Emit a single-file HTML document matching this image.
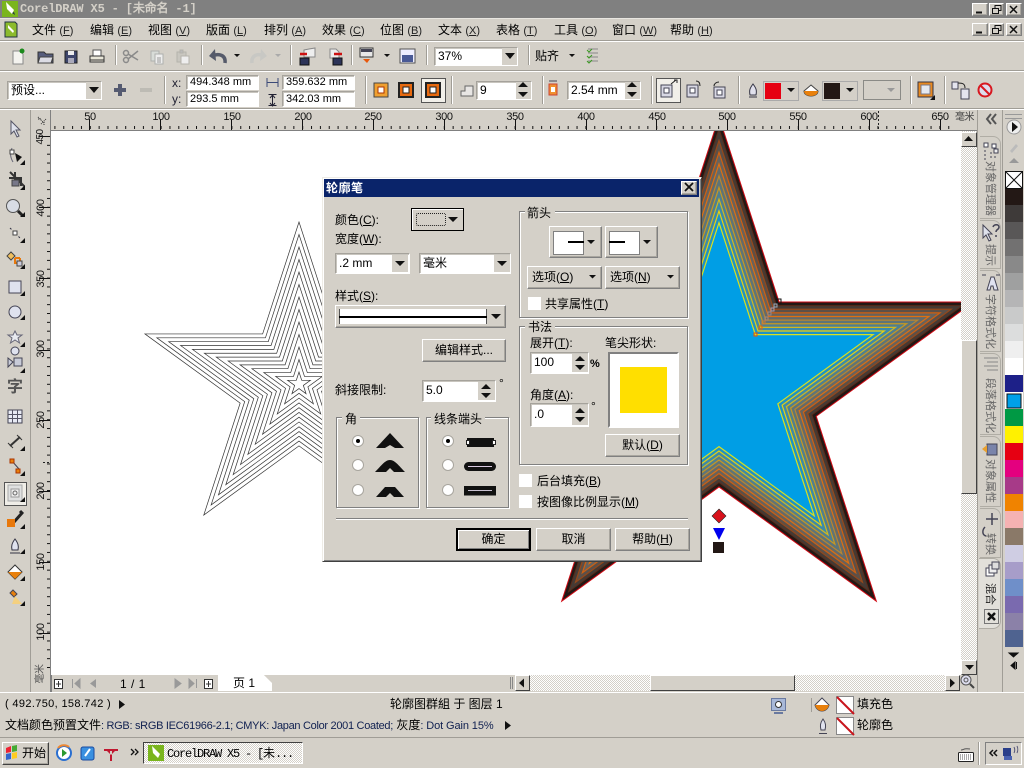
<!DOCTYPE html>
<html lang="zh"><head><meta charset="utf-8"><title>CorelDRAW X5</title>
<style>
html,body{margin:0;padding:0;width:1024px;height:768px;overflow:hidden;background:#d4d0c8}
body{position:relative;font:12px/14px "Liberation Sans","WenQuanYi Zen Hei","Noto Sans CJK SC",sans-serif;color:#000}
.a,.t,.b,.i,.w,.s{position:absolute;box-sizing:border-box}
.t{white-space:nowrap;height:14px}
.b{background:#d4d0c8;border:1px solid;border-color:#fff #808080 #808080 #fff;box-shadow:inset -1px -1px 0 #a9a69f;text-align:center;white-space:nowrap}
.f{position:absolute;background:#d4d0c8}
.i{background:#fff;border:1px solid;border-color:#a5a29b #fff #fff #a5a29b;box-shadow:inset 1px 1px 0 #c8c5be;white-space:nowrap;padding-left:3px}
.w{background:#d4d0c8;border:1px solid;border-color:#fff #404040 #404040 #fff}
.s{width:2px;background:#fff;border-left:1px solid #a09d96}
.h{position:absolute;left:0;width:1024px;height:2px;background:#fff;border-top:1px solid #a09d96;box-sizing:border-box}
.g{position:absolute;box-sizing:border-box;border:1px solid #808080;box-shadow:1px 1px 0 #fff,inset 1px 1px 0 #fff}
.m{font-size:11px;color:#222}
.v{position:absolute;writing-mode:vertical-rl;text-orientation:sideways;white-space:nowrap;font-size:11px;color:#666;left:983px}
.r{position:absolute;font-size:11px;color:#111;letter-spacing:-.4px;transform:translateX(-50%);top:111px;line-height:12px}
.rv{position:absolute;font-size:11px;color:#111;letter-spacing:-.4px;line-height:12px;left:41px;transform:translate(-50%,-50%) rotate(-90deg)}
.mono{font-family:"Liberation Mono","WenQuanYi Zen Hei",monospace}
.dth{background:repeating-conic-gradient(#d4d0c8 0 25%,#fff 0 50%) 0 0/2px 2px}
svg{position:absolute;overflow:visible}
</style></head><body>

<!-- canvas -->
<div class="a" style="left:51px;top:131px;width:910px;height:544px;background:#fff;overflow:hidden">
<svg style="left:0;top:0" width="910" height="544" viewBox="51 131 910 544">
<defs><polygon id="st" points="0,-1 .2245,-.309 .951,-.309 .3633,.118 .5878,.809 0,.382 -.5878,.809 -.3633,.118 -.951,-.309 -.2245,-.309" vector-effect="non-scaling-stroke" stroke-linejoin="miter" stroke-miterlimit="20"/></defs>
<g fill="#fff" stroke="#333" stroke-width=".7">
<use href="#st" transform="translate(299 384) scale(162)"/>
<use href="#st" transform="translate(299 384) scale(149.5)"/>
<use href="#st" transform="translate(299 384) scale(137)"/>
<use href="#st" transform="translate(299 384) scale(124.5)"/>
<use href="#st" transform="translate(299 384) scale(112)"/>
<use href="#st" transform="translate(299 384) scale(99.5)"/>
<use href="#st" transform="translate(299 384) scale(87)"/>
<use href="#st" transform="translate(299 384) scale(74.5)"/>
<use href="#st" transform="translate(299 384) scale(62)"/>
<use href="#st" transform="translate(299 384) scale(49.5)"/>
<use href="#st" transform="translate(299 384) scale(37)"/>
<use href="#st" transform="translate(299 384) scale(24.5)"/>
<use href="#st" transform="translate(299 384) scale(12)"/>
</g>
<use href="#st" transform="translate(719 384.7) scale(267.6)" fill="#231815" stroke="#d00a14" stroke-width="1"/>
<use href="#st" transform="translate(719 384.7) scale(255.9)" fill="#453a34" stroke="#5a2a18" stroke-width="1"/>
<use href="#st" transform="translate(719 384.7) scale(244.1)" fill="#5c5048" stroke="#96481a" stroke-width="1.2"/>
<use href="#st" transform="translate(719 384.7) scale(232.4)" fill="#68625c" stroke="#d06010" stroke-width="1.2"/>
<use href="#st" transform="translate(719 384.7) scale(220.7)" fill="#646a6a" stroke="#de7010" stroke-width="1.2"/>
<use href="#st" transform="translate(719 384.7) scale(208.9)" fill="#5e7478" stroke="#b88630" stroke-width="1.2"/>
<use href="#st" transform="translate(719 384.7) scale(197.2)" fill="#4f7f90" stroke="#c89820" stroke-width="1.2"/>
<use href="#st" transform="translate(719 384.7) scale(185.5)" fill="#3d8aa8" stroke="#d0b820" stroke-width="1.2"/>
<use href="#st" transform="translate(719 384.7) scale(173.7)" fill="#1f92c4" stroke="#e8d010" stroke-width="1.2"/>
<use href="#st" transform="translate(719 384.7) scale(162)" fill="#009ee5" stroke="#d8e020" stroke-width="1.2"/>
<g fill="none" stroke-width="1">
<rect x="777" y="299" width="4" height="4" stroke="#111"/><rect x="774" y="304" width="3" height="3" stroke="#9ab"/><rect x="771" y="308" width="3" height="3" stroke="#a9a"/><rect x="768" y="312" width="3" height="3" stroke="#988"/><rect x="765" y="317" width="3" height="3" stroke="#a87"/><rect x="762" y="321" width="3" height="3" stroke="#c73"/><rect x="759" y="326" width="3" height="3" stroke="#e60"/><rect x="754" y="333" width="3" height="3" stroke="#e50"/>
</g>
<polygon points="719,509 726,516 719,523 712,516" fill="#d8121c" stroke="#222" stroke-width=".6"/>
<polygon points="713,528 725,528 719,540" fill="#0000ee"/>
<rect x="713" y="542" width="11" height="11" fill="#231815"/>
</svg></div>

<!-- scrollbars -->
<div class="a dth" style="left:961px;top:131px;width:16px;height:544px"></div>
<div class="w" style="left:961px;top:132px;width:16px;height:15px"></div>
<div class="w" style="left:961px;top:340px;width:16px;height:154px"></div>
<div class="w" style="left:961px;top:660px;width:16px;height:15px"></div>
<div class="a" style="left:51px;top:675px;width:926px;height:17px;background:#d4d0c8"></div>
<div class="a dth" style="left:530px;top:675px;width:416px;height:16px"></div>
<div class="w" style="left:515px;top:675px;width:15px;height:16px"></div>
<div class="w" style="left:650px;top:675px;width:145px;height:16px"></div>
<div class="w" style="left:945px;top:675px;width:15px;height:16px"></div>
<div class="a" style="left:218px;top:675px;width:54px;height:16px;background:#fff;clip-path:polygon(0 0,85% 0,100% 50%,100% 100%,0 100%);"></div>
<div class="t" style="left:233px;top:676px">页 1</div>
<div class="t" style="left:120px;top:677px;letter-spacing:.5px">1 / 1</div>

<!-- rulers -->
<div class="a" style="left:30px;top:110px;width:947px;height:21px;background:#d4d0c8;border-bottom:1px solid #808080"></div>
<div class="a" style="left:30px;top:110px;width:21px;height:582px;background:#d4d0c8;border-right:1px solid #808080;border-left:1px solid #a09d96"></div>
<div class="a" style="left:51px;top:675px;width:1px;height:17px;background:#808080"></div>
<svg style="left:0;top:0" width="1024" height="768">
<defs>
<pattern id="ph" patternUnits="userSpaceOnUse" x="19" y="126" width="8.85" height="3"><rect width="1" height="3" fill="#111"/></pattern>
<pattern id="pv" patternUnits="userSpaceOnUse" x="47" y="136" width="3" height="8.85"><rect width="3" height="1" fill="#111"/></pattern>
</defs>
<rect x="51" y="126" width="904" height="3" fill="url(#ph)"/>
<rect x="47" y="131" width="3" height="542" fill="url(#pv)"/>
<path d="M89.5 119v11M160.5 119v11M231.5 119v11M302.5 119v11M373.5 119v11M444.5 119v11M515.5 119v11M586.5 119v11M656.5 119v11M727.5 119v11M798.5 119v11M869.5 119v11M940.5 119v11" stroke="#111"/>
<path d="M39 136.5h11M39 207.5h11M39 278.5h11M39 350.5h11M39 420.5h11M39 491.5h11M39 562.5h11M39 633.5h11" stroke="#111"/>
<path d="M878.5 111v19M43 462.5h7" stroke="#222" stroke-dasharray="2 2"/>
<path d="M38 117l6 6M41 124l5-5M38 119h3M44 125v-3" stroke="#333" stroke-dasharray="1 1" fill="none"/>
</svg>
<span class="r" style="left:90px">50</span><span class="r" style="left:161px">100</span><span class="r" style="left:232px">150</span><span class="r" style="left:303px">200</span><span class="r" style="left:373px">250</span><span class="r" style="left:444px">300</span><span class="r" style="left:515px">350</span><span class="r" style="left:586px">400</span><span class="r" style="left:657px">450</span><span class="r" style="left:727px">500</span><span class="r" style="left:798px">550</span><span class="r" style="left:869px">600</span><span class="r" style="left:940px">650</span>
<span class="t" style="left:955px;top:111px;font-size:10px;color:#444;letter-spacing:-.5px">毫米</span>
<span class="rv" style="top:137px;font-size:10px;letter-spacing:-.6px">450</span><span class="rv" style="top:208px">400</span><span class="rv" style="top:279px">350</span><span class="rv" style="top:349px">300</span><span class="rv" style="top:420px">250</span><span class="rv" style="top:491px">200</span><span class="rv" style="top:562px">150</span><span class="rv" style="top:632px">100</span>
<span class="rv" style="top:674px;font-size:10px;color:#555">毫米</span>

<!-- title bar -->
<div class="a" style="left:0;top:0;width:1024px;height:18px;background:#808080"></div>
<div class="a" style="left:2px;top:1px;width:16px;height:16px;background:#7ab51d"></div>
<svg style="left:0;top:0" width="20" height="18"><path d="M6 2l8 8-2 4-5-5z" fill="#fff"/><path d="M12 13l3 2-1-3z" fill="#234"/></svg>
<div class="t mono" style="left:20px;top:2px;color:#d4d0c8;font-weight:bold;font-size:12px;letter-spacing:-.15px">CorelDRAW X5 - [未命名 -1]</div>
<div class="h" style="top:18px;background:#e8e6e0;border:0;height:1px"></div>

<!-- menu -->
<div class="t" style="left:32px;top:23px">文件 <span class="m">(<u>F</u>)</span></div>
<div class="t" style="left:90px;top:23px">编辑 <span class="m">(<u>E</u>)</span></div>
<div class="t" style="left:148px;top:23px">视图 <span class="m">(<u>V</u>)</span></div>
<div class="t" style="left:206px;top:23px">版面 <span class="m">(<u>L</u>)</span></div>
<div class="t" style="left:264px;top:23px">排列 <span class="m">(<u>A</u>)</span></div>
<div class="t" style="left:322px;top:23px">效果 <span class="m">(<u>C</u>)</span></div>
<div class="t" style="left:380px;top:23px">位图 <span class="m">(<u>B</u>)</span></div>
<div class="t" style="left:438px;top:23px">文本 <span class="m">(<u>X</u>)</span></div>
<div class="t" style="left:496px;top:23px">表格 <span class="m">(<u>T</u>)</span></div>
<div class="t" style="left:554px;top:23px">工具 <span class="m">(<u>O</u>)</span></div>
<div class="t" style="left:612px;top:23px">窗口 <span class="m">(<u>W</u>)</span></div>
<div class="t" style="left:670px;top:23px">帮助 <span class="m">(<u>H</u>)</span></div>
<div class="h" style="top:40px"></div><div class="h" style="top:70px"></div><div class="h" style="top:108px"></div>

<!-- window buttons -->
<div class="b" style="left:972px;top:3px;width:16px;height:13px"></div><div class="b" style="left:989px;top:3px;width:15px;height:13px"></div><div class="b" style="left:1006px;top:3px;width:16px;height:13px"></div>
<div class="b" style="left:972px;top:23px;width:16px;height:13px"></div><div class="b" style="left:989px;top:23px;width:15px;height:13px"></div><div class="b" style="left:1006px;top:23px;width:16px;height:13px"></div>
<svg style="left:0;top:0" width="1024" height="110" fill="none" stroke="#111">
<path d="M976 12.5h6M976 32.5h6" stroke-width="2"/>
<path d="M992.5 8.5h6v5h-6zM995 8V5.500h6v5h-2M992.500 28.500h6v5h-6zM995 28v-2.500h6v5h-2"/>
<path d="M1010 6l7 7M1017 6l-7 7M1010 26l7 7M1017 26l-7 7" stroke-width="1.500"/>
<path d="M5 22h10l2 2v13H5z" fill="#8cbb2c" stroke="#234"/><path d="M8 25l6 6-1 2-5-5z" fill="#fff" stroke="none"/>
<path d="M13 51h7l3 3v10H13z" fill="#f4f3ef" stroke="#888"/><circle cx="22" cy="51" r="2.500" fill="#1c8a1c" stroke="none"/>
<path d="M38 52h6l2 2h7v9H38z" fill="#565c7c" stroke="#333"/><path d="M40 57h13l-2 6H38z" fill="#dcdce4" stroke="#444"/>
<path d="M65 51h12v12H65z" fill="#3e466c" stroke="#222"/><rect x="68" y="51" width="6" height="4" fill="#eee" stroke="none"/><rect x="68" y="58" width="6" height="5" fill="#aab" stroke="none"/>
<path d="M93 50h8v6h-8z" fill="#fff" stroke="#555"/><path d="M90 56h14v6H90z" fill="#e8e6d8" stroke="#333"/><path d="M90 60h14" stroke="#333"/>
<g stroke="#8a8a8a" stroke-width="1.500"><circle cx="126" cy="60" r="2.500"/><circle cx="126" cy="53" r="2.500"/><path d="M128 54l10 6M128 59l10-8"/></g>
<g stroke="#aeb0ae"><path d="M151 51h8v10h-8z" fill="#d8dcd8"/><path d="M155 54h8v10h-8z" fill="#eee"/><path d="M157 58h4M157 60h4M157 62h4" stroke="#999"/></g>
<g stroke="#b5b3ac"><path d="M177 52h9v10h-9z" fill="#c9c7c0"/><rect x="180" y="50" width="3" height="3" fill="#bbb"/><path d="M181 56h8v8h-8z" fill="#eee"/></g>
<path d="M225 63c1-8-6-10-13-7" stroke="#555a6a" stroke-width="3.500"/><path d="M215 49l-6 7 7 5z" fill="#555a6a" stroke="none"/>
<path d="M252 63c-1-8 6-10 12-7" stroke="#c8c8c4" stroke-width="3.500"/><path d="M261 49l6 7-7 5z" fill="#c8c8c4" stroke="none"/>
<g fill="#111" stroke="none"><path d="M234 54h6l-3 3zM384 54h6l-3 3zM569 54h6l-3 3z"/></g><path d="M275 54h6l-3 3z" fill="#aaa" stroke="none"/>
<path d="M304 50l5-1 6-1v9h-11z" fill="#eee" stroke="#888"/><path d="M300 58h9v7h-9z" fill="#2c3358"/><path d="M300 54h7" stroke="#c11" stroke-width="2.500"/>
<path d="M330 49h6l3 3v6h-9z" fill="#eee" stroke="#888"/><path d="M333 58h9v7h-9z" fill="#2c3358"/><path d="M334 54h8" stroke="#c11" stroke-width="2.500"/>
<path d="M360 48h13v9h-13z" fill="#e8e8e8" stroke="#333"/><rect x="361" y="49" width="11" height="3" fill="#445" stroke="none"/><path d="M363 59h7l-3 4z" fill="#e8580c" stroke="none"/>
<path d="M400 49h15v14h-15z" fill="#eef" stroke="#555"/><path d="M402 55h11v7h-11z" fill="#4a5a96" stroke="none"/>
<path d="M588 49h10M588 53h10M588 57h10M588 61h10" stroke="#888"/><path d="M587 50l2 2 3-3M587 56l2 2 3-3M587 61l2 2 3-3" stroke="#3a9a20"/>
<path d="M114 88h12v4h-12zM118 84h4v12h-4z" fill="#555a70" stroke="none"/>
<rect x="140" y="88" width="12" height="4" fill="#bdbbb4" stroke="none"/>
<path d="M267 82.500h11M267 78v9M278 78v9" stroke="#3b4a78"/><path d="M272.500 96v9M270 98l2.500-3 2.500 3M270 103l2.500 3 2.500-3M268.500 94.500h8M268.500 105.500h8" stroke="#223"/>
<rect x="374" y="83" width="14" height="14" fill="#f0a030" stroke="#444"/><rect x="378" y="87" width="6" height="6" fill="#fff" stroke="#a30"/>
<rect x="399" y="83" width="14" height="14" fill="#e86a10" stroke="#222" stroke-width="2"/><rect x="403" y="87" width="6" height="6" fill="#fff" stroke="#222"/>
<rect x="421.500" y="78.500" width="24" height="24" fill="#f1efe9" stroke="#555"/>
<rect x="426" y="83" width="14" height="14" fill="#e86a10" stroke="#222" stroke-width="2"/><rect x="430" y="87" width="6" height="6" fill="#fff" stroke="#222"/>
<path d="M461 96v-5h4v-5h8v10z" fill="#e8e6e4" stroke="#666"/>
<rect x="549" y="84" width="8" height="11" fill="#f09030" stroke="#c43"/><rect x="551" y="87" width="4" height="5" fill="#fff" stroke="none"/><path d="M549 81h8" stroke="#445"/>
<rect x="656.500" y="78.500" width="24" height="24" fill="#f1efe9" stroke="#555"/>
<rect x="661" y="85" width="11" height="12" fill="#d8d8e4" stroke="#445"/><rect x="664" y="88" width="5" height="5" fill="#fff" stroke="#445"/><path d="M671 84l5-4M674 80h3v3" stroke="#222"/>
<rect x="687" y="85" width="11" height="12" fill="#d8d8e4" stroke="#445"/><rect x="690" y="88" width="5" height="5" fill="#fff" stroke="#445"/><path d="M696 81c3 0 4 2 4 5" stroke="#222"/>
<rect x="714" y="87" width="11" height="11" fill="#d8d8e4" stroke="#445"/><rect x="717" y="90" width="5" height="5" fill="#fff" stroke="#445"/><path d="M719 82c-3 0-5 2-5 4" stroke="#222"/>
<path d="M753 84c3 4 4 6 3 11h-6c-1-5 0-7 3-11zM749 97h8" fill="#e0e0ec" stroke="#334"/>
<rect x="763.500" y="81.500" width="35" height="19" fill="#d4d0c8" stroke="#aaa"/><rect x="765" y="83" width="16" height="16" fill="#e60012" stroke="none"/>
<rect x="822.500" y="81.500" width="35" height="19" fill="#d4d0c8" stroke="#aaa"/><rect x="824" y="83" width="16" height="16" fill="#231815" stroke="none"/>
<path d="M787 88h8l-4 4zM846 88h8l-4 4z" fill="#111" stroke="none"/>
<path d="M811 85l7 6c0 3-3 5-7 5s-7-2-7-5z" fill="#fff" stroke="#444"/><path d="M804 91h14c0 3-3 5-7 5s-7-2-7-5z" fill="#e8800c" stroke="none"/>
<rect x="863.500" y="80.500" width="37" height="19" fill="#d4d0c8" stroke="#8a8a86"/><path d="M887 88h8l-4 4z" fill="#999" stroke="none"/>
<rect x="918" y="82" width="15" height="15" fill="#e88a20" stroke="#334"/><rect x="921" y="85" width="9" height="9" fill="#e4e8f0" stroke="#778"/><path d="M930 100h5v-5z" fill="#111" stroke="none"/>
<rect x="952" y="82" width="6" height="7" fill="#e4e4ee" stroke="#445"/><rect x="961" y="89" width="8" height="10" fill="#e4e4ee" stroke="#445"/><path d="M958 83c5 0 7 1 7 5" stroke="#222"/>
<circle cx="985" cy="90" r="6.500" stroke="#d81820" stroke-width="2" fill="#dde"/><path d="M981 86l8 8" stroke="#d81820" stroke-width="2"/>
</svg>
<div class="s" style="left:115px;top:45px;height:20px"></div><div class="s" style="left:201px;top:45px;height:20px"></div><div class="s" style="left:290px;top:45px;height:20px"></div><div class="s" style="left:351px;top:45px;height:20px"></div><div class="s" style="left:426px;top:45px;height:20px"></div><div class="s" style="left:528px;top:45px;height:20px"></div>
<div class="s" style="left:164px;top:76px;height:28px"></div><div class="s" style="left:365px;top:76px;height:28px"></div><div class="s" style="left:451px;top:76px;height:28px"></div><div class="s" style="left:542px;top:76px;height:28px"></div><div class="s" style="left:651px;top:76px;height:28px"></div><div class="s" style="left:738px;top:76px;height:28px"></div><div class="s" style="left:910px;top:76px;height:28px"></div><div class="s" style="left:944px;top:76px;height:28px"></div>

<!-- row 1 / row 2 fields -->
<div class="i" style="left:434px;top:47px;width:84px;height:19px;line-height:16px">37%</div>
<div class="f" style="left:502px;top:48px;width:15px;height:17px"></div>
<div class="t" style="left:535px;top:49px">贴齐</div>
<div class="i" style="left:7px;top:81px;width:95px;height:19px;line-height:16px">预设...</div>
<div class="f" style="left:86px;top:82px;width:15px;height:17px"></div>
<div class="t" style="left:172px;top:76px;font-size:12px;color:#223">x:</div><div class="t" style="left:172px;top:92px;color:#223">y:</div>
<div class="i" style="left:186px;top:75px;width:73px;height:15px;line-height:13px;font-size:11px">494.348 mm</div>
<div class="i" style="left:186px;top:91px;width:73px;height:16px;line-height:14px;font-size:11px">293.5 mm</div>
<div class="i" style="left:282px;top:75px;width:73px;height:15px;line-height:13px;font-size:11px">359.632 mm</div>
<div class="i" style="left:282px;top:91px;width:73px;height:16px;line-height:14px;font-size:11px">342.03 mm</div>
<div class="i" style="left:476px;top:81px;width:56px;height:19px;line-height:16px">9</div>
<div class="f" style="left:516px;top:82px;width:15px;height:17px"></div>
<div class="i" style="left:567px;top:81px;width:74px;height:19px;line-height:16px">2.54 mm</div>
<div class="f" style="left:625px;top:82px;width:15px;height:17px"></div>
<svg style="left:0;top:0" width="1024" height="110"><path d="M505 53h10l-5 6zM89 87h10l-5 6zM518 87h10l-5-5zM518 92h10l-5 5zM627 87h10l-5-5zM627 92h10l-5 5z" fill="#111"/></svg>

<!-- left toolbox -->
<div class="a" style="left:4px;top:482px;width:23px;height:24px;background:#f0eee8;border:1px solid #555;box-sizing:border-box"></div>
<svg style="left:0;top:0" width="30" height="640" fill="none" stroke="#444" >
<path d="M11 121v13l3-3 3 6 2-1-3-6h4z" fill="#dfe2ec" stroke="#556"/>
<path d="M12 148c-2 5-2 9 1 14" stroke="#667"/><rect x="10" y="150" width="4" height="4" fill="#fff"/><path d="M15 153l7 4-5 5z" fill="#111" stroke="none"/>
<path d="M10 172l14 14M9 178h12v8M15 172v8h6" stroke="#333" stroke-width="2"/><path d="M12 180h7v6h-7z" fill="#778"/>
<circle cx="13" cy="206" r="6.500" fill="#d8dce4" stroke="#555"/><path d="M18 211l5 5" stroke="#222" stroke-width="3"/>
<path d="M10 228l10 10" stroke="#334" stroke-dasharray="2 2"/><rect x="13" y="231" width="4" height="4" fill="#fff"/>
<path d="M11 252l4 4-4 4-4-4z" fill="#f0c060"/><path d="M15 258v5h5v-5M20 258h-5" stroke="#e8780c" stroke-width="2"/><rect x="17" y="261" width="5" height="5" fill="#ccd" />
<rect x="9" y="281" width="12" height="12" fill="#dfe2ee" stroke="#445"/>
<circle cx="15" cy="312" r="6" fill="#dfe2ee" stroke="#445"/>
<path d="M15 331l2 4h5l-4 3 1.500 5-4.500-3-4.500 3 1.500-5-4-3h5z" fill="#e8eaf0" stroke="#667"/>
<circle cx="15" cy="351" r="4" fill="#dfe2ee" stroke="#445"/><path d="M8 358l5 4-5 5zM14 358h8v8h-8z" fill="#c8cbd8" stroke="#445"/>
<rect x="8" y="410" width="14" height="13" fill="#e8eaf4" stroke="#445"/><path d="M8 414.500h14M8 418.500h14M12.500 410v13M17.500 410v13" stroke="#556"/>
<path d="M10 446l10-9" stroke="#333" stroke-width="2"/><path d="M8 443l5 5M17 435l5 5" stroke="#333"/>
<path d="M12 461l7 8" stroke="#445"/><rect x="10" y="459" width="4" height="4" fill="#e8800c" stroke="#a30"/><rect x="16" y="469" width="4" height="4" fill="#e8800c" stroke="#a30"/>
<rect x="8" y="485" width="14" height="16" fill="#dfe0e0" stroke="#aaa"/><rect x="11" y="489" width="8" height="8" fill="#eee" stroke="#999"/><circle cx="15" cy="493" r="2" stroke="#666"/>
<path d="M14 522l8-9M20 511l3 3" stroke="#222" stroke-width="3"/><rect x="7" y="519" width="8" height="8" fill="#e8780c" stroke="none"/>
<path d="M15 539c3 4 4 7 3 11h-6c-1-4 0-7 3-11zM10 553h10" fill="#e0e2ee" stroke="#334"/>
<path d="M15 565l7 7-7 7-7-7z" fill="#fff" stroke="#333"/><path d="M8 572h14l-7 7z" fill="#e8800c" stroke="none"/>
<path d="M13 590l4 4-3 3-4-4z" fill="#e8800c" stroke="#445"/><path d="M15 596l-3 8h10z" fill="#f4d080" stroke="none"/>
<path d="M25 160v5h-5zM25 185v5h-5zM25 212v5h-5zM25 238v5h-5zM25 264v5h-5zM25 291v5h-5zM25 315v5h-5zM25 342v5h-5zM25 368v5h-5zM25 446v5h-5zM25 471v5h-5zM25 497v5h-5zM25 524v5h-5zM25 549v5h-5zM25 576v5h-5zM25 601v5h-5z" fill="#111" stroke="none"/>
</svg>
<div class="t" style="left:7px;top:380px;font-size:16px;line-height:16px;height:18px;font-weight:bold;color:#555">字</div>

<!-- docker + palette -->
<div class="a" style="left:977px;top:110px;width:1px;height:582px;background:#a09d96"></div>
<div class="a" style="left:1002px;top:110px;width:1px;height:582px;background:#a09d96"></div>
<div class="a" style="left:980px;top:136px;width:21px;height:83px;border:1px solid #b0ada5;border-left:0;border-radius:0 8px 0 0;box-sizing:border-box"></div>
<div class="a" style="left:980px;top:220px;width:21px;height:49px;border:1px solid #b0ada5;border-left:0;border-radius:0 8px 0 0;box-sizing:border-box"></div>
<div class="a" style="left:980px;top:270px;width:21px;height:82px;border:1px solid #b0ada5;border-left:0;border-radius:0 8px 0 0;box-sizing:border-box"></div>
<div class="a" style="left:980px;top:353px;width:21px;height:82px;border:1px solid #b0ada5;border-left:0;border-radius:0 8px 0 0;box-sizing:border-box"></div>
<div class="a" style="left:980px;top:436px;width:21px;height:71px;border:1px solid #b0ada5;border-left:0;border-radius:0 8px 0 0;box-sizing:border-box"></div>
<div class="a" style="left:980px;top:508px;width:21px;height:50px;border:1px solid #b0ada5;border-left:0;border-radius:0 8px 0 0;box-sizing:border-box"></div>
<div class="a" style="left:979px;top:558px;width:22px;height:71px;background:#e2e0da;border:1px solid #b0ada5;border-left:0;border-radius:0 8px 8px 0;box-sizing:border-box"></div>
<div class="v" style="top:161px">对象管理器</div><div class="v" style="top:244px">提示</div><div class="v" style="top:294px">字符格式化</div><div class="v" style="top:378px">段落格式化</div><div class="v" style="top:459px">对象属性</div><div class="v" style="top:533px">转换</div><div class="v" style="top:583px;color:#222">混合</div>
<div class="a" style="left:984px;top:609px;width:15px;height:15px;border:1px solid #777;box-sizing:border-box"></div>

<svg style="left:0;top:0" width="1024" height="700">
<g stroke="none"><rect x="1005" y="171" width="18" height="17" fill="#fff"/>
<rect x="1005" y="188" width="18" height="17" fill="#231815"/><rect x="1005" y="205" width="18" height="17" fill="#3e3a39"/><rect x="1005" y="222" width="18" height="17" fill="#595757"/><rect x="1005" y="239" width="18" height="17" fill="#727171"/><rect x="1005" y="256" width="18" height="17" fill="#898989"/><rect x="1005" y="273" width="18" height="17" fill="#9fa0a0"/><rect x="1005" y="290" width="18" height="17" fill="#b5b5b6"/><rect x="1005" y="307" width="18" height="17" fill="#c9caca"/><rect x="1005" y="324" width="18" height="17" fill="#dcdddd"/><rect x="1005" y="341" width="18" height="17" fill="#efefef"/><rect x="1005" y="358" width="18" height="17" fill="#fff"/><rect x="1005" y="375" width="18" height="17" fill="#1d2088"/><rect x="1005" y="392" width="18" height="17" fill="#fff"/><rect x="1007" y="394" width="14" height="14" fill="#00a0e9" stroke="#111"/>
<rect x="1005" y="409" width="18" height="17" fill="#009944"/><rect x="1005" y="426" width="18" height="17" fill="#fff100"/><rect x="1005" y="443" width="18" height="17" fill="#e60012"/><rect x="1005" y="460" width="18" height="17" fill="#e4007f"/><rect x="1005" y="477" width="18" height="17" fill="#a73a88"/><rect x="1005" y="494" width="18" height="17" fill="#f08300"/><rect x="1005" y="511" width="18" height="17" fill="#f5b2b2"/><rect x="1005" y="528" width="18" height="17" fill="#8a7968"/><rect x="1005" y="545" width="18" height="17" fill="#cfcde3"/><rect x="1005" y="562" width="18" height="17" fill="#a79dc9"/><rect x="1005" y="579" width="18" height="17" fill="#6f8fc9"/><rect x="1005" y="596" width="18" height="17" fill="#7a6aaf"/><rect x="1005" y="613" width="18" height="17" fill="#8b81a8"/><rect x="1005" y="630" width="18" height="17" fill="#4f6390"/></g>
<path d="M1005.500 171.500h17v17h-17zM1005.500 171.500l17 17M1022.500 171.500l-17 17" fill="none" stroke="#111"/>
<path d="M1005 114.500h17M1005 118.500h17" stroke="#999"/>
<circle cx="1014" cy="127" r="7" fill="#eee" stroke="#999"/><path d="M1012 122l6 5-6 5z" fill="#111"/>
<path d="M1010 151l6-7 2 2-6 7z" fill="#bbb"/><path d="M1009 163h10l-5-5z" fill="#999"/>
<path d="M1009 653h9l-4.500 4zM1015 669v-7l-4 3.500zM1016.500 662v7" fill="#111" stroke="#111"/>
<path d="M991 114l-4 5 4 5M996 114l-4 5 4 5" fill="none" stroke="#555" stroke-width="2"/>
<path d="M964 144h9l-4.500-5zM965 668h9l-4.500 5z" fill="#111" transform="translate(0 -3)"/>
<path d="M519 683l5-4.500v9zM955 683l-5-4.500v9z" fill="#111"/>
<circle cx="966" cy="680" r="5" fill="#dde" stroke="#555"/><circle cx="966" cy="680" r="2" fill="none" stroke="#555"/><path d="M970 684l4 4" stroke="#444" stroke-width="2"/>
<g fill="none" stroke="#445"><rect x="984" y="143" width="4" height="4" fill="#fff"/><rect x="992" y="144" width="4" height="4" fill="#fff"/><rect x="994" y="149" width="4" height="4" fill="#eee"/><path d="M985 150v10" stroke-dasharray="2 2"/><path d="M990 153h7M990 157h7" stroke-dasharray="2 2"/>
<path d="M983 225v13l3-3 3 6 2-1-3-6h4z" fill="#dfe2ec"/><path d="M993 227c1-3 6-3 6 0s-3 2-3 5M996 235v2" stroke-width="1.500"/>
<path d="M987 290l4-13h3l4 13h-4l-1-4h-2l-1 4z" fill="#e0e2f0"/><path d="M982 275h4M1000 275h-4" />
<path d="M984 358h14M987 362h11M984 366h14M987 370h11" stroke="#888"/>
<rect x="987" y="444" width="10" height="11" fill="#7a84aa"/><path d="M982 449l5-4v8z" fill="#e8a030" stroke="none"/>
<path d="M985 527c-3 3-3 8 1 9M992 513v12M986 519h12" stroke-width="1.500"/>
<rect x="986" y="568" width="8" height="8" fill="#fff"/><rect x="989" y="565" width="8" height="8" fill="#eee"/><rect x="992" y="562" width="7" height="7" fill="#ddd"/>
<path d="M988 613l7 7M995 613l-7 7" stroke="#111" stroke-width="2.500"/></g>
</svg>

<!-- page bar icons -->
<svg style="left:0;top:0" width="300" height="700">
<rect x="54.500" y="679.500" width="8" height="9" fill="#fff" stroke="#333"/><path d="M56 684h5M58.500 681v6" stroke="#333"/>
<path d="M80 679v9l-5-4.500zM72.500 679v9" fill="#999" stroke="#999"/><path d="M96 679v9l-6-4.500z" fill="#999"/>
<path d="M175 679v9l6-4.500zM189 679v9l5-4.500zM196.500 679v9" fill="#999" stroke="#999"/>
<rect x="204.500" y="679.500" width="8" height="9" fill="#fff" stroke="#333"/><path d="M206 684h5M208.500 681v6" stroke="#333"/>
</svg>
<div class="a" style="left:510px;top:677px;width:3px;height:12px;border-left:1px solid #888;border-right:1px solid #888;box-sizing:border-box"></div>

<!-- status -->
<div class="a" style="left:0;top:692px;width:1024px;height:46px;background:#d4d0c8;border-top:1px solid #fff;border-bottom:1px solid #a09d96;box-sizing:border-box"></div>
<div class="t" style="left:5px;top:697px;font-size:11px;letter-spacing:.35px">( 492.750, 158.742 )</div>
<div class="t" style="left:390px;top:697px">轮廓图群組 于 图层 1</div>
<div class="t" style="left:5px;top:718px">文档颜色预置文件<span style="color:#102050;font-size:11px;letter-spacing:-.3px">: RGB: sRGB IEC61966-2.1; CMYK: Japan Color 2001 Coated;</span> 灰度<span style="color:#102050;font-size:11px;letter-spacing:-.1px">: Dot Gain 15%</span></div>
<div class="t" style="left:857px;top:697px">填充色</div><div class="t" style="left:857px;top:718px">轮廓色</div>
<svg style="left:0;top:0" width="1024" height="768">
<path d="M119 700v9l6-4.500zM505 721v9l6-4.500z" fill="#111"/>
<rect x="771.500" y="698.500" width="14" height="12" fill="#a8b8d8" stroke="#6a7aa0"/><circle cx="778.500" cy="704.500" r="3" fill="#fff" stroke="#333"/><path d="M774 713h9" stroke="#6a7aa0" stroke-width="2"/>
<path d="M811.500 698v14" stroke="#a09d96"/>
<path d="M822 698l7 7c-1 4-4 6-7 6s-6-2-7-6z" fill="#fff" stroke="#445"/><path d="M815 705h14c-1 4-4 6-7 6s-6-2-7-6z" fill="#e8800c"/>
<path d="M823 719c3 4 3 7 2 11h-4c-1-4-1-7 2-11zM819 733.500h8" fill="#e0e2ee" stroke="#445"/>
<rect x="836.500" y="696.500" width="17" height="17" fill="#fff" stroke="#888"/><path d="M837 697l17 17" stroke="#c8161d" stroke-width="2"/>
<rect x="836.500" y="717.500" width="17" height="17" fill="#fff" stroke="#888"/><path d="M837 718l17 17" stroke="#c8161d" stroke-width="2"/>
</svg>

<!-- taskbar -->
<div class="b" style="left:2px;top:742px;width:47px;height:23px;border-color:#fff #404040 #404040 #fff;text-align:left;padding:3px 0 0 19px">开始</div>
<div class="a" style="left:143px;top:742px;width:160px;height:22px;border:1px solid;border-color:#404040 #fff #fff #404040;box-sizing:border-box;background:repeating-conic-gradient(#d4d0c8 0 25%,#fff 0 50%) 0 0/2px 2px"></div>
<div class="t mono" style="left:167px;top:747px;letter-spacing:-1.2px">CorelDRAW X5 - [<span style="letter-spacing:0">未</span>...</div>
<div class="a" style="left:985px;top:742px;width:37px;height:23px;border:1px solid;border-color:#808080 #fff #fff #808080;box-sizing:border-box"></div>
<div class="s" style="left:978px;top:742px;height:23px"></div>
<svg style="left:0;top:0" width="1024" height="768">
<path d="M6 748l5-2v6l-5 1z" fill="#e23"/><path d="M12 746l5-1v6l-5 1z" fill="#4a3"/><path d="M6 754l5-1v6l-5 1z" fill="#36c"/><path d="M12 753l5-1v6l-5 1z" fill="#fc2"/>
<circle cx="64" cy="753" r="7" fill="#fff" stroke="#2a6fd0" stroke-width="2"/><path d="M58 748a8 8 0 0 1 11-1" stroke="#e83" stroke-width="2" fill="none"/><path d="M62 749l5 4-5 4z" fill="#2a9a30"/>
<rect x="81" y="747" width="13" height="13" rx="2" fill="#3a90e0" stroke="#1a4aa0"/><path d="M85 756l5-7" stroke="#fff" stroke-width="2"/>
<path d="M104 749h14v2h-14zM110 749h2v12h-2zM107 751l4 4 4-4z" fill="#c01830"/>
<path d="M131 749l3 3-3 3M135 749l3 3-3 3" fill="none" stroke="#111" stroke-width="1.300"/>
<rect x="148" y="745" width="16" height="16" fill="#7ab51d"/><path d="M152 746l8 8-2 4-5-5z" fill="#fff"/>
<rect x="958.500" y="752.500" width="15" height="9" rx="1" fill="#fff" stroke="#222"/><path d="M960 755h12M960 757h12M960 759h12" stroke="#555" stroke-dasharray="1 1"/><path d="M961 750c3 0 2-2 9-1" stroke="#555" fill="none"/>
<path d="M993 750l-3 3 3 3M997 750l-3 3 3 3" fill="none" stroke="#111" stroke-width="1.500"/>
<rect x="1003" y="748" width="8" height="8" fill="#2a3f8a"/><rect x="1004" y="756" width="8" height="4" fill="#4a62b0"/><path d="M1014 747c1 2 1 4 0 6M1017 746c1 2 1 5 0 7" stroke="#557" fill="none"/>
</svg>

<!-- dialog -->
<div class="a" style="left:322px;top:177px;width:380px;height:385px;background:#d4d0c8;border:1px solid;border-color:#eeece6 #404040 #404040 #eeece6;box-sizing:border-box;box-shadow:inset 1px 1px 0 #fff,inset -1px -1px 0 #808080">
</div>
<div class="a" style="left:324px;top:179px;width:375px;height:18px;background:#0a246a"></div>
<div class="t" style="left:326px;top:181px;color:#fff;font-weight:bold;letter-spacing:.5px">轮廓笔</div>
<div class="b" style="left:681px;top:181px;width:16px;height:14px"></div>

<div class="t" style="left:335px;top:213px">颜色(<u>C</u>):</div>
<div class="a" style="left:411px;top:208px;width:53px;height:23px;border:1px solid #000;box-sizing:border-box;box-shadow:inset 1px 1px 0 #fff"></div>
<div class="a" style="left:416px;top:213px;width:30px;height:13px;border:1px dotted #222;border-radius:2px;box-sizing:border-box"></div>
<div class="t" style="left:335px;top:232px">宽度(<u>W</u>):</div>
<div class="i" style="left:335px;top:253px;width:75px;height:21px;line-height:19px;font-size:12px">.2 mm</div>
<div class="f" style="left:392px;top:255px;width:16px;height:17px"></div>
<div class="i" style="left:419px;top:253px;width:92px;height:21px;line-height:19px">毫米</div>
<div class="f" style="left:494px;top:255px;width:16px;height:17px"></div>
<div class="t" style="left:335px;top:289px">样式(<u>S</u>):</div>
<div class="b" style="left:335px;top:305px;width:171px;height:23px"></div>
<div class="a" style="left:339px;top:309px;width:148px;height:15px;background:#fff;border-left:1px solid #555;border-right:1px solid #555;box-sizing:border-box"></div>
<div class="a" style="left:339px;top:316px;width:148px;height:2px;background:#000"></div>
<div class="b" style="left:422px;top:339px;width:84px;height:23px;line-height:21px">编辑样式...</div>

<div class="t" style="left:335px;top:383px">斜接限制:</div>
<div class="i" style="left:422px;top:380px;width:74px;height:22px;line-height:19px;font-size:12px">5.0</div>
<div class="t" style="left:499px;top:376px">°</div>

<div class="g" style="left:336px;top:417px;width:83px;height:91px"></div>
<div class="a" style="left:342px;top:412px;width:18px;height:14px;background:#d4d0c8;padding-left:3px;box-sizing:border-box">角</div>
<div class="g" style="left:426px;top:417px;width:83px;height:91px"></div>
<div class="a" style="left:431px;top:412px;width:54px;height:14px;background:#d4d0c8;padding-left:3px;box-sizing:border-box;white-space:nowrap">线条端头</div>

<div class="g" style="left:519px;top:211px;width:169px;height:107px"></div>
<div class="a" style="left:525px;top:206px;width:30px;height:14px;background:#d4d0c8;padding-left:2px;box-sizing:border-box">箭头</div>
<div class="b" style="left:549px;top:226px;width:53px;height:32px"></div>
<div class="a" style="left:553px;top:231px;width:31px;height:24px;background:#fff;border:1px solid #808080;box-sizing:border-box"></div>
<div class="b" style="left:605px;top:226px;width:53px;height:32px"></div>
<div class="a" style="left:609px;top:231px;width:31px;height:24px;background:#fff;border:1px solid #808080;box-sizing:border-box"></div>
<div class="b" style="left:527px;top:266px;width:75px;height:23px;line-height:21px;text-align:left;padding-left:4px">选项(<u>O</u>)</div>
<div class="b" style="left:605px;top:266px;width:75px;height:23px;line-height:21px;text-align:left;padding-left:4px">选项(<u>N</u>)</div>
<div class="a" style="left:528px;top:297px;width:13px;height:13px;background:#fff"></div>
<div class="t" style="left:545px;top:297px">共享属性(<u>T</u>)</div>

<div class="g" style="left:519px;top:326px;width:169px;height:139px"></div>
<div class="a" style="left:525px;top:320px;width:30px;height:14px;background:#d4d0c8;padding-left:3px;box-sizing:border-box">书法</div>
<div class="t" style="left:530px;top:336px">展开(<u>T</u>):</div>
<div class="t" style="left:605px;top:336px">笔尖形状:</div>
<div class="i" style="left:530px;top:352px;width:59px;height:22px;line-height:19px">100</div>
<div class="t" style="left:590px;top:357px;font-size:11px;font-weight:bold">%</div>
<div class="a" style="left:608px;top:352px;width:71px;height:76px;background:#fff;border:2px solid;border-color:#808080 #fff #fff #808080;box-sizing:border-box"></div>
<div class="a" style="left:620px;top:367px;width:47px;height:46px;background:#ffdf00"></div>
<div class="t" style="left:530px;top:388px">角度(<u>A</u>):</div>
<div class="i" style="left:530px;top:403px;width:59px;height:24px;line-height:21px">.0</div>
<div class="t" style="left:591px;top:399px">°</div>
<div class="b" style="left:605px;top:434px;width:75px;height:23px;line-height:21px">默认(<u>D</u>)</div>
<div class="a" style="left:519px;top:474px;width:13px;height:13px;background:#fff"></div>
<div class="t" style="left:537px;top:474px">后台填充(<u>B</u>)</div>
<div class="a" style="left:519px;top:495px;width:13px;height:13px;background:#fff"></div>
<div class="t" style="left:537px;top:495px">按图像比例显示(<u>M</u>)</div>
<div class="a" style="left:336px;top:518px;width:352px;height:2px;background:#fff;border-top:1px solid #808080;box-sizing:border-box"></div>
<div class="b" style="left:456px;top:528px;width:75px;height:23px;line-height:19px;border:2px solid #000;box-shadow:inset 1px 1px 0 #fff,inset -1px -1px 0 #808080">确定</div>
<div class="b" style="left:536px;top:528px;width:75px;height:23px;line-height:21px">取消</div>
<div class="b" style="left:615px;top:528px;width:75px;height:23px;line-height:21px">帮助(<u>H</u>)</div>

<svg style="left:0;top:0" width="1024" height="768">
<path d="M685 183l8 8M693 183l-8 8" stroke="#111" stroke-width="1.800"/>
<path d="M448 217h10l-5 5zM395 261h10l-5 5zM497 261h10l-5 5zM491 314h10l-5 5zM587 240h8l-4 4zM643 240h8l-4 4zM589 275h7l-3.500 3.500zM667 275h7l-3.500 3.500z" fill="#111"/>
<rect x="568" y="241" width="16" height="2" fill="#000"/><rect x="609" y="241" width="16" height="2" fill="#000"/>
<g><rect x="478" y="382" width="17" height="18" fill="#d4d0c8"/><path d="M481 389l5-5 5 5zM481 393h10l-5 5z" fill="#111"/>
<rect x="572" y="354" width="16" height="18" fill="#d4d0c8"/><path d="M575 361l5-5 5 5zM575 365h10l-5 5z" fill="#111"/>
<rect x="572" y="405" width="16" height="20" fill="#d4d0c8"/><path d="M575 413l5-5 5 5zM575 417h10l-5 5z" fill="#111"/></g>
<path d="M376 448l14-15 14 15h-9l-5-3-5 3z" fill="#111"/>
<path d="M375 472c6-6 10-12 15-12s9 6 15 12h-11l-4-4-4 4z" fill="#111"/>
<path d="M376 497l9-10h10l9 10h-10l-4-4-4 4z" fill="#111"/>
<g fill="#fff" stroke="#a8a59e"><circle cx="358" cy="441" r="5.500"/><circle cx="358" cy="465" r="5.500"/><circle cx="358" cy="490" r="5.500"/><circle cx="448" cy="441" r="5.500"/><circle cx="448" cy="465" r="5.500"/><circle cx="448" cy="490" r="5.500"/></g>
<circle cx="358" cy="441" r="2" fill="#000"/><circle cx="448" cy="441" r="2" fill="#000"/>
<rect x="467" y="438" width="27" height="9" fill="#111"/><rect x="466.500" y="440.500" width="3" height="4" fill="#fff" stroke="#222"/><rect x="492.500" y="440.500" width="3" height="4" fill="#fff" stroke="#222"/>
<rect x="464" y="462" width="32" height="9" rx="4.500" fill="#111"/><path d="M468 466.500h24" stroke="#d8c8e0"/>
<rect x="464" y="486" width="32" height="9.500" fill="#111"/><path d="M468 490.500h24" stroke="#c8c0d0"/>
</svg>
</body></html>
